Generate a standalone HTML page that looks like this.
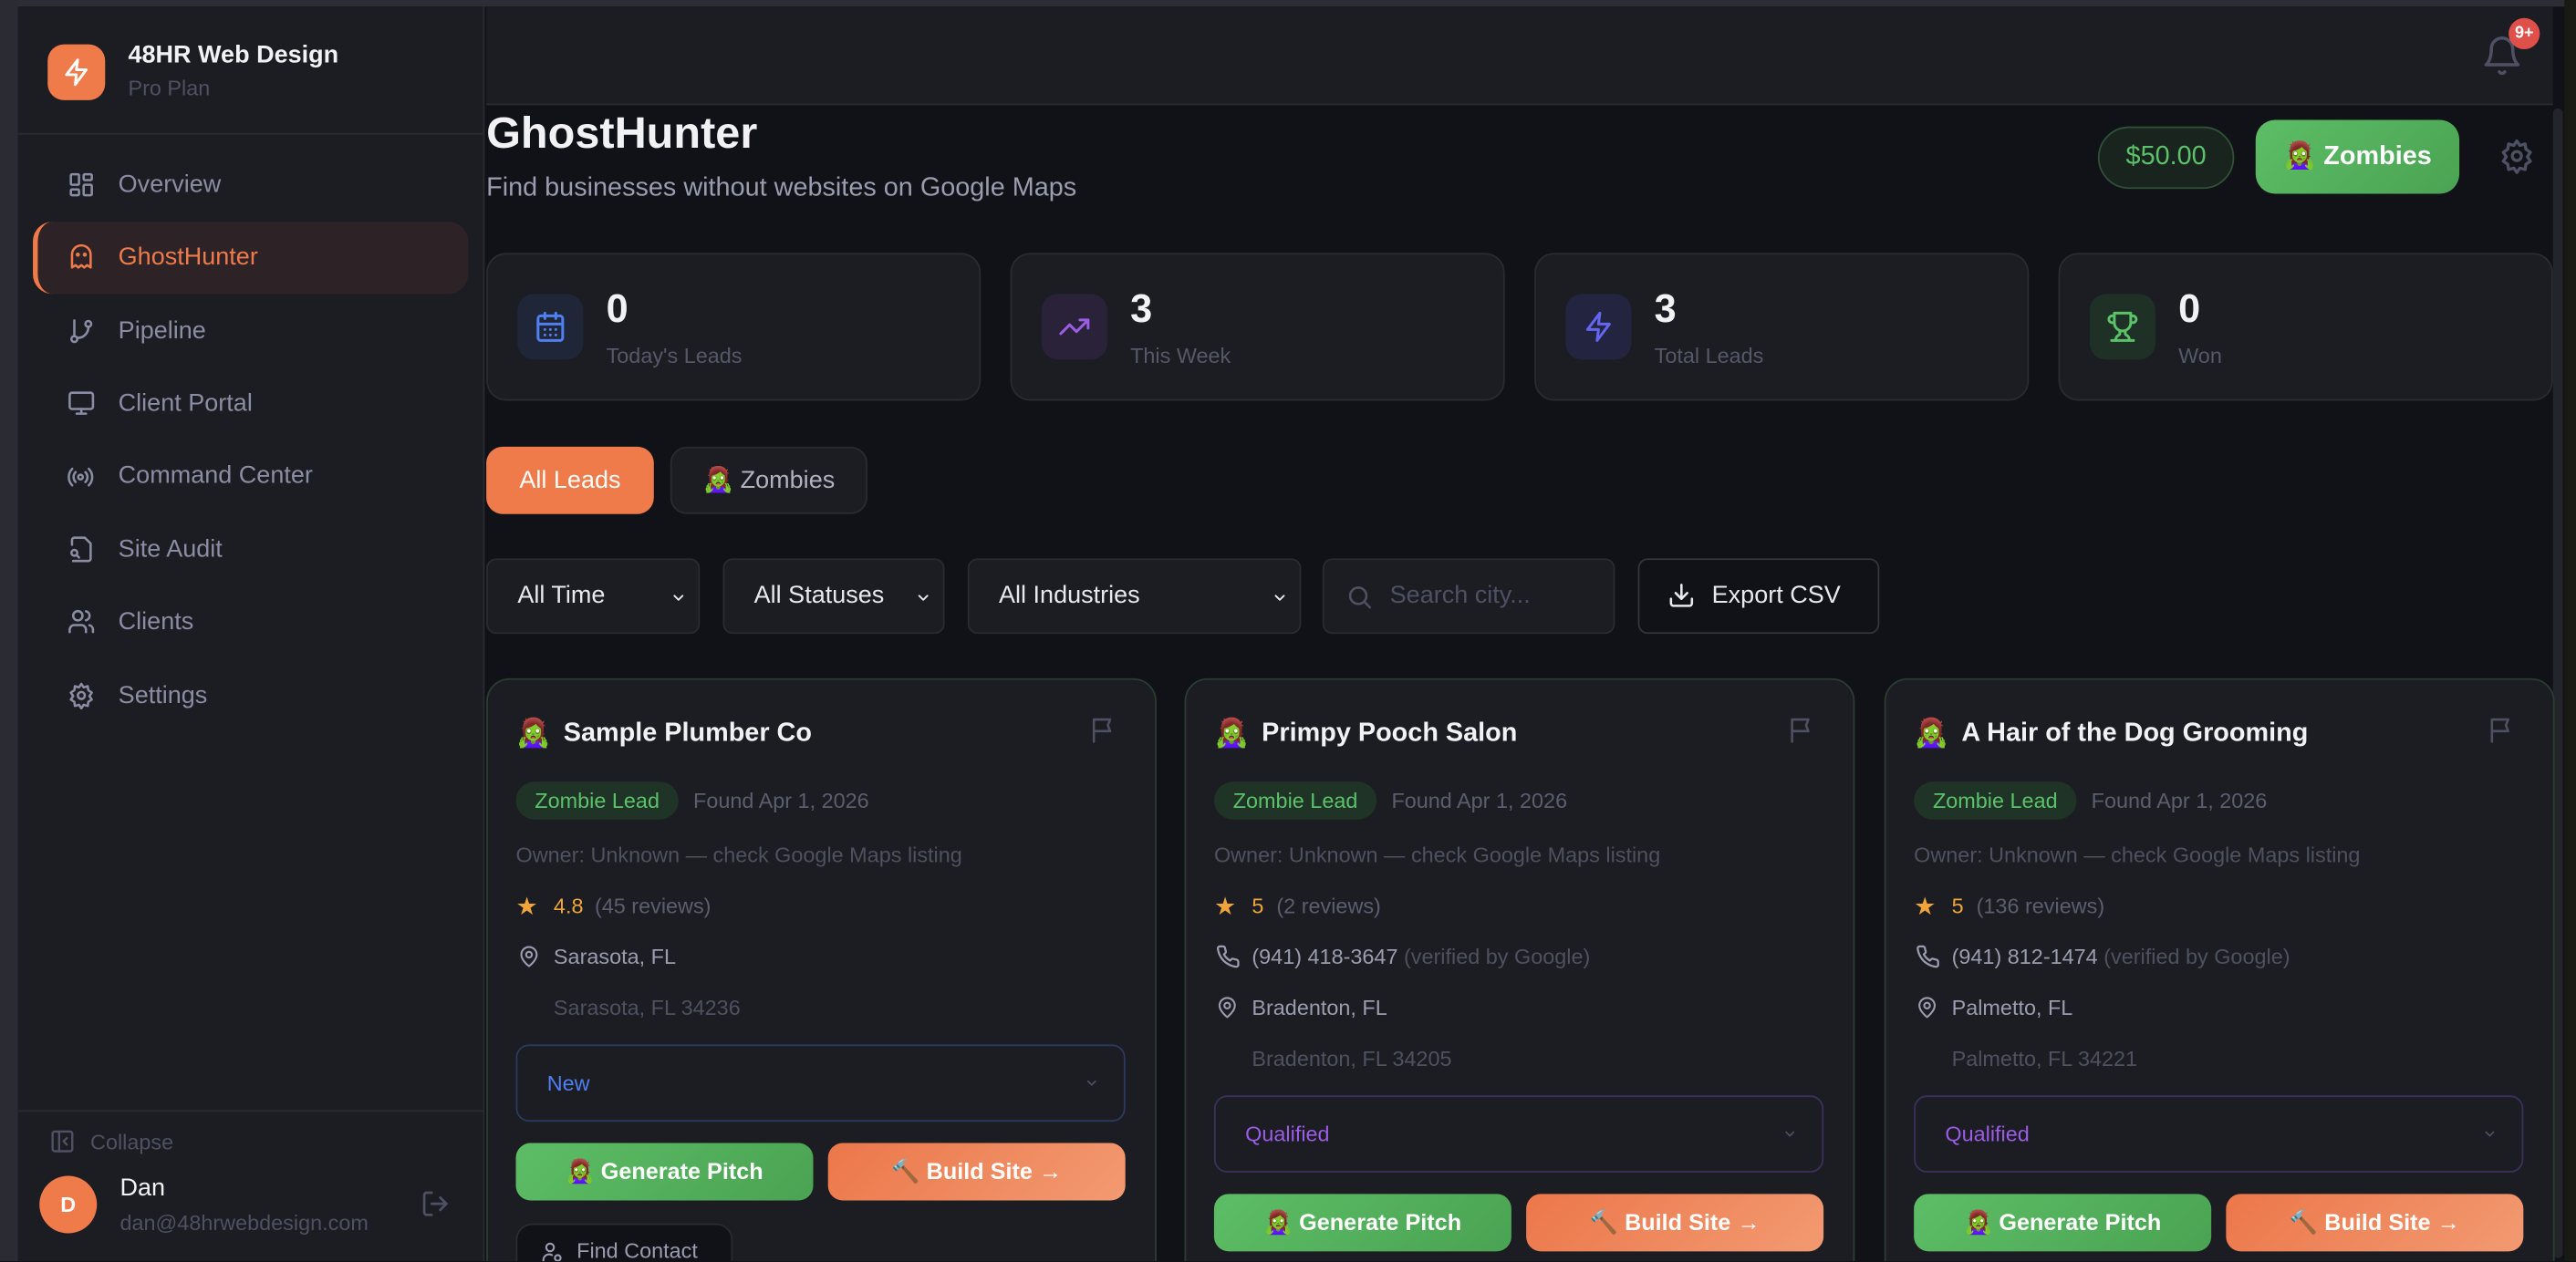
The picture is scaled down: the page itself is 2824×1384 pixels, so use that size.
<!DOCTYPE html>
<html><head><meta charset="utf-8"><style>
*{box-sizing:border-box;margin:0;padding:0}
html,body{width:2824px;height:1384px;overflow:hidden;background:#111217}
#r{position:absolute;left:0;top:0;width:1568px;height:768px;transform:scale(1.801);transform-origin:0 0;font-family:"Liberation Sans",sans-serif;background:#111217;overflow:hidden}
.a{position:absolute}
.t{position:absolute;white-space:nowrap}
svg{position:absolute;fill:none;stroke-linecap:round;stroke-linejoin:round}
.nav{position:absolute;left:72px;font-size:15px;color:#8a8da3}
.card{position:absolute;top:154px;width:301px;height:90px;background:#1c1d22;border:1px solid #2a2b31;border-radius:12px}
.ib{position:absolute;left:18px;top:24px;width:40px;height:40px;border-radius:10px}
.num{position:absolute;left:72px;top:20px;font-size:24px;font-weight:bold;color:#f2f2f5}
.lab{position:absolute;left:72px;top:54px;font-size:13px;color:#555869}
.fl{position:absolute;top:340px;height:46px;background:#1c1d22;border:1px solid #2a2b31;border-radius:6px;font-size:15px;color:#e8e8ee;padding:13px 18px}
.chev{position:absolute;right:6px;top:18px}
.lc{position:absolute;top:413px;width:408px;height:380px;background:#1c1d22;border:1px solid #2b3d30;border-radius:14px}
.lc .t{font-size:13px}
.btn{position:absolute;height:35px;border-radius:9px;color:#fff;font-size:14px;font-weight:bold;text-align:center;line-height:35px}
</style></head><body><div id="r">
<div class="a" style="left:0;top:0;width:1568px;height:4px;background:#2c2d35"></div>
<div class="a" style="left:0;top:0;width:11px;height:768px;background:#2a2b33"></div>
<div class="a" style="left:1561px;top:0;width:7px;height:768px;background:#1a1a14"></div>
<div class="a" style="left:1554px;top:66px;width:6px;height:700px;background:#24252b;border-radius:3px"></div>
<!-- sidebar -->
<div class="a" style="left:11px;top:4px;width:284px;height:764px;background:#1c1d22;border-right:1px solid #2a2b30"></div>
<div class="a" style="left:11px;top:81px;width:284px;height:1px;background:#2a2b30"></div>
<div class="a" style="left:29px;top:27px;width:35px;height:34px;background:#ef7a4a;border-radius:10px"></div>
<svg style="left:37px;top:35px" width="19" height="18" viewBox="0 0 24 24" stroke="#fff" stroke-width="2.2"><path d="M13 2L4 14h8l-1 8 9-12h-8l1-8z"/></svg>
<div class="t" style="left:78px;top:25px;font-size:15px;font-weight:bold;color:#f2f2f5">48HR Web Design</div>
<div class="t" style="left:78px;top:46px;font-size:13px;color:#4e5163">Pro Plan</div>
<div class="a" style="left:20px;top:135px;width:265px;height:44px;background:#2d2226;border-radius:12px;border-left:3px solid #ef7a4a"></div>
<svg style="left:41px;top:104px" width="17" height="17" viewBox="0 0 24 24" stroke="#8a8da3" stroke-width="2"><rect x="3" y="3" width="7" height="9" rx="1"/><rect x="14" y="3" width="7" height="5" rx="1"/><rect x="14" y="12" width="7" height="9" rx="1"/><rect x="3" y="16" width="7" height="5" rx="1"/></svg>
<div class="nav" style="top:104px">Overview</div>
<svg style="left:41px;top:148px" width="17" height="17" viewBox="0 0 24 24" stroke="#ef7a4a" stroke-width="2"><path d="M4 21V10a8 8 0 0 1 16 0v11l-3-2-2.5 2-2.5-2-2.5 2L7 19z"/><circle cx="9" cy="10" r=".8"/><circle cx="15" cy="10" r=".8"/></svg>
<div class="nav" style="top:148px;color:#ef7a4a">GhostHunter</div>
<svg style="left:41px;top:193px" width="17" height="17" viewBox="0 0 24 24" stroke="#8a8da3" stroke-width="2"><circle cx="6" cy="19" r="2.5"/><circle cx="18" cy="6" r="2.5"/><path d="M6 3v13.5M18 8.5A9 9 0 0 1 8.5 18"/></svg>
<div class="nav" style="top:193px">Pipeline</div>
<svg style="left:41px;top:237px" width="17" height="17" viewBox="0 0 24 24" stroke="#8a8da3" stroke-width="2"><rect x="2" y="3" width="20" height="14" rx="2"/><path d="M8 21h8M12 17v4"/></svg>
<div class="nav" style="top:281px">Command Center</div>
<div class="nav" style="top:237px">Client Portal</div>
<svg style="left:40px;top:282px" width="18" height="17" viewBox="0 0 24 24" stroke="#8a8da3" stroke-width="2"><circle cx="12" cy="12" r="2"/><path d="M16.2 7.8a6 6 0 0 1 0 8.5M7.8 16.2a6 6 0 0 1 0-8.5M19.1 4.9a10 10 0 0 1 0 14.2M4.9 19.1a10 10 0 0 1 0-14.2"/></svg>
<svg style="left:41px;top:326px" width="17" height="17" viewBox="0 0 24 24" stroke="#8a8da3" stroke-width="2"><path d="M4 8V4a2 2 0 0 1 2-2h9l5 5v13a2 2 0 0 1-2 2H5"/><circle cx="6" cy="15" r="2.5"/><path d="M8 17l2 2"/></svg>
<div class="nav" style="top:326px">Site Audit</div>
<svg style="left:41px;top:370px" width="17" height="17" viewBox="0 0 24 24" stroke="#8a8da3" stroke-width="2"><circle cx="9" cy="7" r="4"/><path d="M2 21v-2a4 4 0 0 1 4-4h6a4 4 0 0 1 4 4v2M16 3.1a4 4 0 0 1 0 7.8M22 21v-2a4 4 0 0 0-3-3.9"/></svg>
<div class="nav" style="top:370px">Clients</div>
<svg style="left:41px;top:415px" width="17" height="17" viewBox="0 0 24 24" stroke="#8a8da3" stroke-width="2"><circle cx="12" cy="12" r="3"/><path d="M12 2l2 3 3.5-1 .5 3.5 3 2-2 3 2 3-3 2-.5 3.5-3.5-1-2 3-2-3-3.5 1L6 17.5l-3-2 2-3-2-3 3-2 .5-3.5 3.5 1z"/></svg>
<div class="nav" style="top:415px">Settings</div>
<div class="a" style="left:11px;top:676px;width:284px;height:1px;background:#2a2b30"></div>
<svg style="left:30px;top:687px" width="16" height="16" viewBox="0 0 24 24" stroke="#4e5163" stroke-width="2"><rect x="3" y="3" width="18" height="18" rx="2"/><path d="M9 3v18M16 9l-3 3 3 3"/></svg>
<div class="t" style="left:55px;top:688px;font-size:13px;color:#4e5163">Collapse</div>
<div class="a" style="left:24px;top:716px;width:35px;height:35px;border-radius:50%;background:#ef7a4a;color:#fff;font-size:13px;font-weight:bold;text-align:center;line-height:35px">D</div>
<div class="t" style="left:73px;top:715px;font-size:15px;color:#f2f2f5">Dan</div>
<div class="t" style="left:73px;top:737px;font-size:13px;color:#4e5163">dan@48hrwebdesign.com</div>
<svg style="left:256px;top:724px" width="18" height="18" viewBox="0 0 24 24" stroke="#4e5163" stroke-width="2"><path d="M9 21H5a2 2 0 0 1-2-2V5a2 2 0 0 1 2-2h4M16 17l5-5-5-5M21 12H9"/></svg>
<!-- topbar -->
<div class="a" style="left:296px;top:4px;width:1258px;height:60px;background:#1c1d22;border-bottom:1px solid #2a2b30"></div>
<svg style="left:1510px;top:20px" width="26" height="28" viewBox="0 0 24 24" stroke="#4e5163" stroke-width="1.8"><path d="M6 8a6 6 0 0 1 12 0c0 7 3 9 3 9H3s3-2 3-9M10.5 21a1.8 1.8 0 0 0 3 0"/></svg>
<div class="a" style="left:1527px;top:11px;width:19px;height:19px;border-radius:50%;background:#e0504a;color:#fff;font-size:10px;font-weight:bold;text-align:center;line-height:19px">9+</div>
<!-- header -->
<div class="t" style="left:296px;top:66px;font-size:27px;font-weight:bold;color:#f2f2f5">GhostHunter</div>
<div class="t" style="left:296px;top:106px;font-size:16px;color:#9a9cb0">Find businesses without websites on Google Maps</div>
<div class="a" style="left:1277px;top:77px;width:83px;height:38px;border-radius:19px;background:#1a241e;border:1px solid #2e5236;color:#5cc26a;font-size:16px;text-align:center;line-height:36px">$50.00</div>
<div class="a" style="left:1373px;top:73px;width:124px;height:45px;border-radius:12px;background:linear-gradient(135deg,#5dbd66,#4aa352);color:#fff;font-size:16px;font-weight:bold;line-height:45px;padding-left:17px">🧟‍♀️ Zombies</div>
<svg style="left:1521px;top:84px" width="22" height="22" viewBox="0 0 24 24" stroke="#4e5163" stroke-width="2"><circle cx="12" cy="12" r="3"/><path d="M12 2l2 3 3.5-1 .5 3.5 3 2-2 3 2 3-3 2-.5 3.5-3.5-1-2 3-2-3-3.5 1L6 17.5l-3-2 2-3-2-3 3-2 .5-3.5 3.5 1z"/></svg>
<!-- stats -->
<div class="card" style="left:296px"><div class="ib" style="background:#1f2638"></div><svg style="left:28px;top:34px" width="20" height="20" viewBox="0 0 24 24" stroke="#4f7ff0" stroke-width="2"><rect x="3" y="4" width="18" height="18" rx="2"/><path d="M16 2v4M8 2v4M3 10h18M8 14h.01M12 14h.01M16 14h.01M8 18h.01M12 18h.01M16 18h.01"/></svg><div class="num">0</div><div class="lab">Today's Leads</div></div>
<div class="card" style="left:615px"><div class="ib" style="background:#2a2238"></div><svg style="left:28px;top:34px" width="20" height="20" viewBox="0 0 24 24" stroke="#9b5ce6" stroke-width="2"><path d="M22 7l-8.5 8.5-5-5L2 17M16 7h6v6"/></svg><div class="num">3</div><div class="lab">This Week</div></div>
<div class="card" style="left:934px"><div class="ib" style="background:#232540"></div><svg style="left:28px;top:34px" width="20" height="20" viewBox="0 0 24 24" stroke="#6366f1" stroke-width="2"><path d="M13 2L4 14h8l-1 8 9-12h-8l1-8z"/></svg><div class="num">3</div><div class="lab">Total Leads</div></div>
<div class="card" style="left:1253px"><div class="ib" style="background:#1f3026"></div><svg style="left:28px;top:34px" width="20" height="20" viewBox="0 0 24 24" stroke="#5cc26a" stroke-width="2"><path d="M6 9H4.5a2.5 2.5 0 0 1 0-5H6M18 9h1.5a2.5 2.5 0 0 0 0-5H18M4 22h16M10 14.7V17c0 .6-.5 1-1 1.2C7.8 18.8 7 20.2 7 22M14 14.7V17c0 .6.5 1 1 1.2 1.2.6 2 2 2 3.8M18 2H6v7a6 6 0 0 0 12 0z"/></svg><div class="num">0</div><div class="lab">Won</div></div>
<!-- tabs -->
<div class="a" style="left:296px;top:272px;width:102px;height:41px;border-radius:10px;background:#ef7a4a;color:#fff;font-size:15px;text-align:center;line-height:41px">All Leads</div>
<div class="a" style="left:408px;top:272px;width:120px;height:41px;border-radius:10px;background:#1c1d22;border:1px solid #2a2b31;color:#b0b2c2;font-size:15px;text-align:center;line-height:39px">🧟‍♀️ Zombies</div>
<!-- filters -->
<div class="fl" style="left:296px;width:130px">All Time<svg class="chev" width="12" height="10" viewBox="0 0 24 24" stroke="#e8e8ee" stroke-width="2.5"><path d="M6 9l6 6 6-6"/></svg></div>
<div class="fl" style="left:440px;width:135px">All Statuses<svg class="chev" width="12" height="10" viewBox="0 0 24 24" stroke="#e8e8ee" stroke-width="2.5"><path d="M6 9l6 6 6-6"/></svg></div>
<div class="fl" style="left:589px;width:203px">All Industries<svg class="chev" width="12" height="10" viewBox="0 0 24 24" stroke="#e8e8ee" stroke-width="2.5"><path d="M6 9l6 6 6-6"/></svg></div>
<div class="fl" style="left:805px;width:178px;padding-left:40px;color:#4e5163">Search city...<svg style="left:13px;top:14px" width="17" height="17" viewBox="0 0 24 24" stroke="#4e5163" stroke-width="2"><circle cx="11" cy="11" r="7"/><path d="M21 21l-4.5-4.5"/></svg></div>
<div class="fl" style="left:997px;width:147px;background:#111217;border-color:#34353d;padding-left:44px">Export CSV<svg style="left:17px;top:13px" width="17" height="17" viewBox="0 0 24 24" stroke="#e8e8ee" stroke-width="2"><path d="M21 15v4a2 2 0 0 1-2 2H5a2 2 0 0 1-2-2v-4M7 10l5 5 5-5M12 15V3"/></svg></div>
<!-- lead cards -->
<div class="lc" style="left:296px">
 <div class="t" style="left:17px;top:23px;font-size:17px">🧟‍♀️</div><div class="t" style="left:46px;top:24px;font-size:16px;font-weight:bold;color:#f2f2f5">Sample Plumber Co</div>
 <svg style="left:366px;top:22px" width="17" height="17" viewBox="0 0 24 24" stroke="#4e5163" stroke-width="2"><path d="M4 22V3h14l-2 5 2 5H4"/></svg>
 <div class="t" style="left:17px;top:62px;width:99px;height:23px;border-radius:12px;background:#1f3326;color:#5cc26a;text-align:center;line-height:23px">Zombie Lead</div>
 <div class="t" style="left:125px;top:66px;color:#5b5e6e">Found Apr 1, 2026</div>
 <div class="t" style="left:17px;top:99px;color:#4e5160">Owner: Unknown — check Google Maps listing</div>
 <div class="t" style="left:17px;top:129px;color:#f0a43a;font-size:15px">★</div><div class="t" style="left:40px;top:130px;color:#f0a43a">4.8</div><div class="t" style="left:65px;top:130px;color:#5b5e6e">(45 reviews)</div>
 <svg style="left:18px;top:161px" width="14" height="15" viewBox="0 0 24 24" stroke="#9a9cb0" stroke-width="2"><path d="M20 10c0 6-8 12-8 12s-8-6-8-12a8 8 0 0 1 16 0z"/><circle cx="12" cy="10" r="3"/></svg>
 <div class="t" style="left:40px;top:161px;color:#9a9cb0">Sarasota, FL</div>
 <div class="t" style="left:40px;top:192px;color:#4e5160">Sarasota, FL 34236</div>
 <div class="a" style="left:17px;top:222px;width:371px;height:47px;border:1px solid #2b3a5e;border-radius:8px;color:#4f7ff0;font-size:13px;padding:15px 0 0 18px">New<svg style="left:344px;top:18px" width="11" height="9" viewBox="0 0 24 24" stroke="#4e5163" stroke-width="2.5"><path d="M6 9l6 6 6-6"/></svg></div>
 <div class="btn" style="left:17px;top:282px;width:181px;background:linear-gradient(135deg,#5dbd66,#4aa352)">🧟‍♀️ Generate Pitch</div>
 <div class="btn" style="left:207px;top:282px;width:181px;background:linear-gradient(135deg,#ec774a,#f29a72)">🔨 Build Site →</div>
 <div class="a" style="left:17px;top:331px;width:132px;height:40px;border:1px solid #2a2b31;border-radius:10px;background:#111217;color:#9a9cb0;font-size:13px;padding:8px 0 0 36px">Find Contact<svg style="left:14px;top:9px" width="14" height="15" viewBox="0 0 24 24" stroke="#9a9cb0" stroke-width="2"><circle cx="10" cy="7" r="4"/><path d="M3 21v-1a6 6 0 0 1 9-5"/><circle cx="18" cy="18" r="3"/></svg></div>
</div>
<div class="lc" style="left:721px">
 <div class="t" style="left:17px;top:23px;font-size:17px">🧟‍♀️</div><div class="t" style="left:46px;top:24px;font-size:16px;font-weight:bold;color:#f2f2f5">Primpy Pooch Salon</div>
 <svg style="left:366px;top:22px" width="17" height="17" viewBox="0 0 24 24" stroke="#4e5163" stroke-width="2"><path d="M4 22V3h14l-2 5 2 5H4"/></svg>
 <div class="t" style="left:17px;top:62px;width:99px;height:23px;border-radius:12px;background:#1f3326;color:#5cc26a;text-align:center;line-height:23px">Zombie Lead</div>
 <div class="t" style="left:125px;top:66px;color:#5b5e6e">Found Apr 1, 2026</div>
 <div class="t" style="left:17px;top:99px;color:#4e5160">Owner: Unknown — check Google Maps listing</div>
 <div class="t" style="left:17px;top:129px;color:#f0a43a;font-size:15px">★</div><div class="t" style="left:40px;top:130px;color:#f0a43a">5</div><div class="t" style="left:55px;top:130px;color:#5b5e6e">(2 reviews)</div>
 <svg style="left:18px;top:161px" width="15" height="15" viewBox="0 0 24 24" stroke="#9a9cb0" stroke-width="2"><path d="M22 16.9v3a2 2 0 0 1-2.2 2 19.8 19.8 0 0 1-8.6-3.1 19.5 19.5 0 0 1-6-6A19.8 19.8 0 0 1 2.1 4.2 2 2 0 0 1 4.1 2h3a2 2 0 0 1 2 1.7c.1 1 .4 1.9.7 2.8a2 2 0 0 1-.5 2.1L8 9.9a16 16 0 0 0 6 6l1.3-1.3a2 2 0 0 1 2.1-.4c.9.3 1.8.6 2.8.7a2 2 0 0 1 1.7 2z"/></svg>
 <div class="t" style="left:40px;top:161px;color:#9a9cb0">(941) 418-3647 <span style="color:#4e5160">(verified by Google)</span></div>
 <svg style="left:18px;top:192px" width="14" height="15" viewBox="0 0 24 24" stroke="#9a9cb0" stroke-width="2"><path d="M20 10c0 6-8 12-8 12s-8-6-8-12a8 8 0 0 1 16 0z"/><circle cx="12" cy="10" r="3"/></svg>
 <div class="t" style="left:40px;top:192px;color:#9a9cb0">Bradenton, FL</div>
 <div class="t" style="left:40px;top:223px;color:#4e5160">Bradenton, FL 34205</div>
 <div class="a" style="left:17px;top:253px;width:371px;height:47px;border:1px solid #3b2f5e;border-radius:8px;color:#9b5ce6;font-size:13px;padding:15px 0 0 18px">Qualified<svg style="left:344px;top:18px" width="11" height="9" viewBox="0 0 24 24" stroke="#4e5163" stroke-width="2.5"><path d="M6 9l6 6 6-6"/></svg></div>
 <div class="btn" style="left:17px;top:313px;width:181px;background:linear-gradient(135deg,#5dbd66,#4aa352)">🧟‍♀️ Generate Pitch</div>
 <div class="btn" style="left:207px;top:313px;width:181px;background:linear-gradient(135deg,#ec774a,#f29a72)">🔨 Build Site →</div>
</div>
<div class="lc" style="left:1147px">
 <div class="t" style="left:17px;top:23px;font-size:17px">🧟‍♀️</div><div class="t" style="left:46px;top:24px;font-size:16px;font-weight:bold;color:#f2f2f5">A Hair of the Dog Grooming</div>
 <svg style="left:366px;top:22px" width="17" height="17" viewBox="0 0 24 24" stroke="#4e5163" stroke-width="2"><path d="M4 22V3h14l-2 5 2 5H4"/></svg>
 <div class="t" style="left:17px;top:62px;width:99px;height:23px;border-radius:12px;background:#1f3326;color:#5cc26a;text-align:center;line-height:23px">Zombie Lead</div>
 <div class="t" style="left:125px;top:66px;color:#5b5e6e">Found Apr 1, 2026</div>
 <div class="t" style="left:17px;top:99px;color:#4e5160">Owner: Unknown — check Google Maps listing</div>
 <div class="t" style="left:17px;top:129px;color:#f0a43a;font-size:15px">★</div><div class="t" style="left:40px;top:130px;color:#f0a43a">5</div><div class="t" style="left:55px;top:130px;color:#5b5e6e">(136 reviews)</div>
 <svg style="left:18px;top:161px" width="15" height="15" viewBox="0 0 24 24" stroke="#9a9cb0" stroke-width="2"><path d="M22 16.9v3a2 2 0 0 1-2.2 2 19.8 19.8 0 0 1-8.6-3.1 19.5 19.5 0 0 1-6-6A19.8 19.8 0 0 1 2.1 4.2 2 2 0 0 1 4.1 2h3a2 2 0 0 1 2 1.7c.1 1 .4 1.9.7 2.8a2 2 0 0 1-.5 2.1L8 9.9a16 16 0 0 0 6 6l1.3-1.3a2 2 0 0 1 2.1-.4c.9.3 1.8.6 2.8.7a2 2 0 0 1 1.7 2z"/></svg>
 <div class="t" style="left:40px;top:161px;color:#9a9cb0">(941) 812-1474 <span style="color:#4e5160">(verified by Google)</span></div>
 <svg style="left:18px;top:192px" width="14" height="15" viewBox="0 0 24 24" stroke="#9a9cb0" stroke-width="2"><path d="M20 10c0 6-8 12-8 12s-8-6-8-12a8 8 0 0 1 16 0z"/><circle cx="12" cy="10" r="3"/></svg>
 <div class="t" style="left:40px;top:192px;color:#9a9cb0">Palmetto, FL</div>
 <div class="t" style="left:40px;top:223px;color:#4e5160">Palmetto, FL 34221</div>
 <div class="a" style="left:17px;top:253px;width:371px;height:47px;border:1px solid #3b2f5e;border-radius:8px;color:#9b5ce6;font-size:13px;padding:15px 0 0 18px">Qualified<svg style="left:344px;top:18px" width="11" height="9" viewBox="0 0 24 24" stroke="#4e5163" stroke-width="2.5"><path d="M6 9l6 6 6-6"/></svg></div>
 <div class="btn" style="left:17px;top:313px;width:181px;background:linear-gradient(135deg,#5dbd66,#4aa352)">🧟‍♀️ Generate Pitch</div>
 <div class="btn" style="left:207px;top:313px;width:181px;background:linear-gradient(135deg,#ec774a,#f29a72)">🔨 Build Site →</div>
</div>
</div></body></html>
